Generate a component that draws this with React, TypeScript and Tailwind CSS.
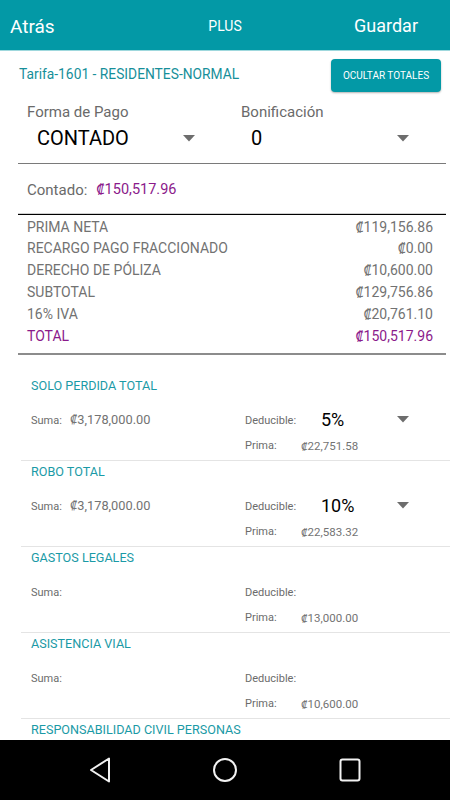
import React from "react";

const Arrow = () => (
  <svg width="12" height="7" viewBox="0 0 12 7" className="block">
    <path d="M0 0 L12 0 L6 6.5 Z" fill="#6d6d6d" />
  </svg>
);

type Sec = {
  title: string;
  suma?: string;
  ded?: string;
  prima: string;
};

const sections: Sec[] = [
  { title: "SOLO PERDIDA TOTAL", suma: "₡3,178,000.00", ded: "5%", prima: "₡22,751.58" },
  { title: "ROBO TOTAL", suma: "₡3,178,000.00", ded: "10%", prima: "₡22,583.32" },
  { title: "GASTOS LEGALES", prima: "₡13,000.00" },
  { title: "ASISTENCIA VIAL", prima: "₡10,600.00" },
];

const rows: { l: string; v: string; h: string; purple?: boolean }[] = [
  { l: "PRIMA NETA", v: "₡119,156.86", h: "h-[19px]" },
  { l: "RECARGO PAGO FRACCIONADO", v: "₡0.00", h: "h-[22px]" },
  { l: "DERECHO DE PÓLIZA", v: "₡10,600.00", h: "h-[22px]" },
  { l: "SUBTOTAL", v: "₡129,756.86", h: "h-[22px]" },
  { l: "16% IVA", v: "₡20,761.10", h: "h-[22px]" },
  { l: "TOTAL", v: "₡150,517.96", h: "h-[22px]", purple: true },
];

export default function App() {
  return (
    <div
      className="w-[450px] h-[800px] flex flex-col bg-white overflow-hidden"
      style={{ fontFamily: "Roboto, 'Noto Sans', sans-serif" }}
    >
      {/* Header */}
      <div className="h-[51px] shrink-0 bg-[#0399a6] border-b border-[#9fd8dd] pt-[2px] grid grid-cols-3 items-center text-white">
        <div className="pl-[10px] text-[19px] leading-none">Atrás</div>
        <div className="text-center text-[14px] leading-none">PLUS</div>
        <div className="text-right pr-[32px] text-[18px] leading-none">Guardar</div>
      </div>

      <div className="flex-1 overflow-hidden">
        {/* Tarifa row */}
        <div className="mt-[8px] flex items-center justify-between pl-[19px] pr-[9px]">
          <div className="text-[13.8px] text-[#178f9a] leading-none -mt-[2px]">
            Tarifa-1601 - RESIDENTES-NORMAL
          </div>
          <div className="h-[33px] w-[110px] rounded-[4px] bg-[#0399a6] text-white text-[10px] flex items-center justify-center shadow-[0_1px_2px_rgba(0,0,0,0.3)]">
            OCULTAR TOTALES
          </div>
        </div>

        {/* Dropdowns */}
        <div className="mt-[12px] ml-[18px] w-[428px] border-b border-[#7a7a7a] pb-[13px] grid grid-cols-[223px_1fr]">
          <div>
            <div className="pl-[9px] text-[15px] leading-[16px] text-[#6a6a6a]">Forma de Pago</div>
            <div className="mt-[6px] h-[24px] pl-[19px] pr-[46px] flex items-center justify-between">
              <span className="text-[20px] text-black leading-none">CONTADO</span>
              <Arrow />
            </div>
          </div>
          <div>
            <div className="text-[15px] leading-[16px] text-[#6a6a6a]">Bonificación</div>
            <div className="mt-[6px] h-[24px] pl-[10px] pr-[37px] flex items-center justify-between">
              <span className="text-[20px] text-black leading-none">0</span>
              <Arrow />
            </div>
          </div>
        </div>

        {/* Contado */}
        <div className="mt-[16px] h-[20px] pl-[27px] flex items-center gap-[9px] text-[15px]">
          <span className="text-[#6a6a6a]">Contado:</span>
          <span className="text-[#8b1a8b] text-[14.5px]">₡150,517.96</span>
        </div>

        <div className="mt-[13px] ml-[18px] w-[428px] h-[1px] bg-[#d0d0d0]" />
        <div className="ml-[18px] w-[428px] h-[1px] bg-black" />

        {/* Totals table */}
        <div className="ml-[18px] w-[428px] pt-[3px] pl-[9px] pr-[13px]">
          {rows.map((r) => (
            <div
              key={r.l}
              className={`${r.h} flex items-center justify-between text-[14px] ${
                r.purple ? "text-[#8b1a8b]" : "text-[#727272]"
              }`}
            >
              <span>{r.l}</span>
              <span>{r.v}</span>
            </div>
          ))}
        </div>
        <div className="mt-[6px] ml-[18px] w-[428px] h-[2px] bg-[#8c8c8c]" />

        {/* Coverage sections */}
        <div className="pt-[20px]">
          {sections.map((s, i) => (
            <div key={s.title}>
              <div className="ml-[21px] pl-[10px]">
                <div className="h-[22px] flex items-center text-[12.6px] text-[#1a9aa6]">{s.title}</div>
                <div className="mt-[12px] grid grid-cols-[214px_1fr]">
                  <div className="h-[25px] flex items-center text-[#6b6b6b]">
                    <span className="w-[39px] text-[11px]">Suma:</span>
                    {s.suma && <span className="text-[12.8px] text-[#737373] -mt-[3px]">{s.suma}</span>}
                  </div>
                  <div className="h-[25px] flex items-center text-[#6b6b6b]">
                    <span className="w-[76px] text-[11px]">Deducible:</span>
                    {s.ded && (
                      <>
                        <span className="w-[76px] text-[18px] text-black leading-none -mt-[4px]">{s.ded}</span>
                        <span className="-mt-[4px]">
                          <Arrow />
                        </span>
                      </>
                    )}
                  </div>
                  <div className="h-[25px]" />
                  <div className="h-[25px] flex items-center text-[#6b6b6b]">
                    <span className="w-[56px] text-[11px]">Prima:</span>
                    <span className="text-[11.5px] text-[#737373]">{s.prima}</span>
                  </div>
                </div>
              </div>
              <div className="mt-[1px] ml-[21px] h-[1px] bg-[#e4e4e4]" />
              {i === sections.length - 1 && (
                <div className="ml-[21px] pl-[10px]">
                  <div className="h-[22px] flex items-center text-[12.6px] text-[#1a9aa6]">
                    RESPONSABILIDAD CIVIL PERSONAS
                  </div>
                </div>
              )}
            </div>
          ))}
        </div>
      </div>

      {/* Nav bar */}
      <div className="h-[60px] shrink-0 bg-black flex items-center">
        <svg width="450" height="60" viewBox="0 0 450 60" className="block">
          <path d="M109 18.5 L109 41.5 L91 30 Z" fill="none" stroke="#f2f2f2" strokeWidth="2" strokeLinejoin="round" />
          <circle cx="225" cy="30" r="11" fill="none" stroke="#f2f2f2" strokeWidth="2" />
          <rect x="340.5" y="19.5" width="19" height="21" rx="2" fill="none" stroke="#f2f2f2" strokeWidth="2" />
        </svg>
      </div>
    </div>
  );
}
